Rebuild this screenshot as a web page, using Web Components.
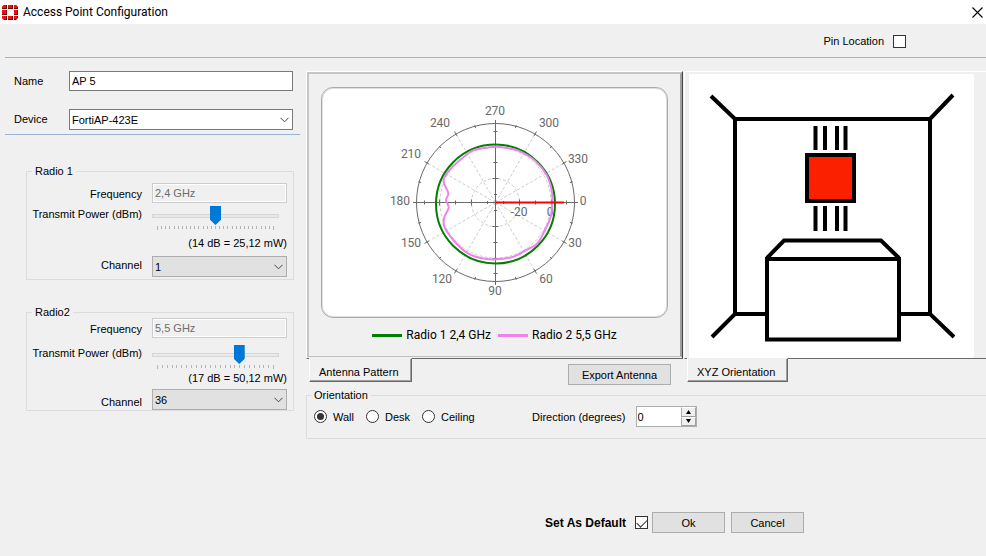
<!DOCTYPE html>
<html lang="en">
<head>
<meta charset="utf-8">
<title>Access Point Configuration</title>
<style>
  body { margin: 0; background: #f0f0f0; color: #000; font: 11px/16px "Liberation Sans", Arial, sans-serif; }
</style>
</head>
<body>
<ap-dialog></ap-dialog>

<script>
const base = `
  * { box-sizing: border-box; }
  :host { display: block; }
  input, select, button { font: inherit; color: inherit; margin: 0; border-radius: 0; }
  svg { display: block; }
  .check { appearance: none; flex: none; width: 13px; height: 13px; border: 1px solid #333; background: #fff; display: grid; place-items: center; }
  .check:checked::before { content: ""; width: 9px; height: 5px; border: solid #333; border-width: 0 0 1px 1px; transform: translateY(-1px) rotate(-45deg); }
`;

function define(name, html) {
  customElements.define(name, class extends HTMLElement {
    connectedCallback() {
      if (this.shadowRoot) return;
      const root = this.attachShadow({ mode: "open" });
      root.innerHTML = `<style>${base}</style>` + (typeof html === "function" ? html(this) : html);
    }
  });
}

define("title-bar", `
  <style>
    :host { background: #fff; }
    header { display: flex; align-items: center; height: 24px; margin-bottom: 1px; padding: 0 1px 0 2px; font: 12px/16px Roboto, sans-serif; }
    h1 { font: inherit; margin: 0 auto 0 5px; }
    button { border: 0; background: none; padding: 0; width: 13px; }
  </style>
  <header>
    <svg width="16" height="15" viewBox="0 0 16 15" aria-hidden="true">
      <g fill="#700"><path d="M0 2L2 0h3v4H0zM6 0h5v4H6zM12 0h2l2 2v2h-4zM0 5h5v5H0zM12 5h4v5h-4zM0 11h5v4H2L0 13zM6 11h5v4H6zM12 11h4v2l-2 2h-2z"/></g>
      <g fill="#f01010"><path d="M0 2L2 0h2v3H0zM6 0h4v3H6zM12 0h2l1 1v2h-3zM0 5h4v4H0zM12 5h3v4h-3zM0 11h4v3H1L0 13zM6 11h4v3H6zM12 11h3v2l-1 1h-2z"/></g>
    </svg>
    <h1>Access Point Configuration</h1>
    <button type="button" aria-label="Close"><svg width="11" height="11" viewBox="0 0 11 11"><path d="M.5 .5l10 10M10.5 .5l-10 10" stroke="#000" stroke-width="1.1"/></svg></button>
  </header>`);

define("pin-bar", `
  <style>
    :host { display: flow-root; margin-left: 5px; border-bottom: 1px solid #99b4d1; }
    label { display: flex; align-items: center; justify-content: flex-end; gap: 9px; height: 32px; padding-right: 80px; }
  </style>
  <label>Pin Location <input class="check" type="checkbox"></label>`);

define("win-select", el => `
  <style>
    :host { display: grid; }
    select { appearance: none; grid-area: 1/1; width: 100%; height: 21px; padding: 0 20px 0 2px; border: 1px solid var(--edge, #adadad); background: var(--face, #e1e1e1); }
    svg { grid-area: 1/1; place-self: center end; margin-right: 4px; pointer-events: none; }
  </style>
  <select aria-label="${el.getAttribute("label")}"><option>${el.getAttribute("value")}</option></select>
  <svg width="9" height="6" viewBox="0 0 9 6"><path d="M.5 .8l4 4 4-4" fill="none" stroke="#444"/></svg>`);

define("device-form", `
  <style>
    div { display: grid; grid-template-columns: 55px minmax(0, 1fr); row-gap: 18px; align-items: center; padding: 13px 7px 4px 9px; margin-left: 5px; border-bottom: 1px solid #99b4d1; }
    input { width: 100%; height: 20px; border: 1px solid #7a7a7a; background: #fff; padding: 0 2px; }
    span { margin-bottom: 2px; }
    win-select { --edge: #7a7a7a; --face: #fff; }
  </style>
  <div>
    <label for="name">Name</label><input id="name" value="AP 5">
    <span>Device</span><win-select label="Device" value="FortiAP-423E"></win-select>
  </div>`);

define("power-slider", el => {
  const max = +el.getAttribute("max");
  let ticks = "";
  for (let i = 0; i <= max; i++) {
    const x = Math.round(i * 116 / max) + .5;
    ticks += `M${x} 0v${i % max ? 3 : 4}`;
  }
  return `
  <style>
    :host { width: 127px; }
    input { appearance: none; display: block; width: 100%; height: 20px; background: none; }
    input::-webkit-slider-runnable-track { height: 4px; border: 1px solid #d6d6d6; background: #e7eaea; }
    input::-webkit-slider-thumb { appearance: none; width: 11px; height: 19px; margin-top: -9px; background: #0078d7; clip-path: polygon(0 0, 100% 0, 100% 72%, 50% 100%, 0 72%); }
    svg { margin-left: 5px; }
  </style>
  <input type="range" min="0" max="${max}" value="${el.getAttribute("value")}" aria-label="Transmit Power (dBm)">
  <svg width="117" height="4" viewBox="0 0 117 4"><path d="${ticks}" stroke="#b4b4b4"/></svg>`;
});

define("radio-settings", el => {
  const a = n => el.getAttribute(n);
  return `
  <style>
    fieldset { margin: 0; min-width: 0; padding: 6px 6px 2px 5px; border: 1px solid #dcdcdc; }
    legend { padding: 0 3px; line-height: 12px; }
    .grid { display: grid; grid-template-columns: 110px minmax(0, 1fr); column-gap: 10px; grid-template-rows: 20px 27px 26px 21px; align-items: end; }
    :host([compact]) fieldset { padding-top: 0; padding-bottom: 0; }
    :host([compact]) .grid { grid-template-rows: 20px 31px 18px 23px; }
    .grid > label, .grid > span { justify-self: end; white-space: nowrap; margin-bottom: 1px; }
    .grid > .power { margin-bottom: 8px; }
    .grid > .channel { margin-bottom: 4px; }
    :host([compact]) .grid > .channel { margin-bottom: 0; }
    output { grid-column: 1 / -1; place-self: center end; }
    input { width: 100%; height: 20px; border: 1px solid #ccc; background: #f0f0f0; color: #6d6d6d; padding: 0 2px; box-shadow: inset 0 0 0 1px #fff; }
  </style>
  <fieldset>
    <legend>${a("name")}</legend>
    <div class="grid">
      <label for="freq">Frequency</label><input id="freq" value="${a("frequency")}" disabled>
      <span class="power">Transmit Power (dBm)</span><power-slider max="${a("max")}" value="${a("power")}"></power-slider>
      <output>${a("readout")}</output>
      <span class="channel">Channel</span><win-select label="Channel" value="${a("channel")}"></win-select>
    </div>
  </fieldset>`;
});

define("polar-chart", () => {
  const cx = 495.5, cy = 202.5, f = n => n.toFixed(2);
  const at = (deg, r) => `${f(cx + r * Math.cos(deg * Math.PI / 180))} ${f(cy + r * Math.sin(deg * Math.PI / 180))}`;
  let spokes = "", ticks = "";
  for (let d = 0; d < 360; d += 15) {
    if (d % 30 === 0) {
      if (d % 90) spokes += `M${at(d, 0)}L${at(d, 79)}`;
      ticks += `M${at(d, 77)}L${at(d, 82)}`;
    } else ticks += `M${at(d, 77)}L${at(d, 80)}`;
  }
  for (const [r, h] of [[8, 1.5], [24, 3], [40, 2], [56, 3], [71, 2]])
    for (const s of [-r, r]) ticks += `M${cx + s} ${cy - h}v${2 * h}M${cx - h} ${cy + s}h${2 * h}`;
  // Gain samples of radio 2 in thirds of a pixel, joined by a closed smooth curve.
  const p = [[287,140],[260,143],[220,151],[196,167],[160,198],[133,232],[132,250],[145,280],[138,300],[146,323],[133,352],[133,380],[160,420],[200,458],[245,475],[287,478],[340,470],[375,452],[412,430],[435,390],[452,350],[457,307],[455,270],[440,225],[405,182],[355,152],[320,144]]
    .map(([x, y]) => [400 + x / 3, 100 + y / 3]);
  let curve = `M${f(p[0][0])} ${f(p[0][1])}`;
  p.forEach((b, i) => {
    const n = p.length, a = p[(i + n - 1) % n], c = p[(i + 1) % n], d = p[(i + 2) % n];
    curve += `C${[0, 1].map(k => f(b[k] + (c[k] - a[k]) / 6)).join(" ")} ${[0, 1].map(k => f(c[k] - (d[k] - b[k]) / 6)).join(" ")} ${f(c[0])} ${f(c[1])}`;
  });
  const labels = [["270",495,115],["240",440,127],["300",549,127],["210",411,158],["330",578,163],["180",400,205],["0",583,205],["150",411,247],["30",575,247],["120",442,283],["60",546,283],["90",495,295],["-20",519,216],["0",550,216]]
    .map(([t, x, y]) => `<text x="${x}" y="${y}">${t}</text>`).join("");
  return `
  <style>
    :host { font: 12px/16px Roboto, sans-serif; }
    figure { margin: 0; padding: 13px 12px; }
    .plot { border: 1px solid #aaa; border-radius: 12px; background: #fff; box-shadow: inset 0 0 0 1px #e0e0e0; }
    .plot svg { margin: 0 auto; padding: 1px 0; box-sizing: content-box; }
    text { fill: #696969; text-anchor: middle; }
    figcaption { display: flex; justify-content: center; gap: 7px; margin-top: 9px; }
    figcaption span { display: flex; align-items: center; gap: 4px; white-space: nowrap; }
    i { width: 30px; height: 3px; background: green; }
    .second i { background: violet; }
  </style>
  <figure>
    <div class="plot">
      <svg width="343" height="227" viewBox="323 89 343 227" role="img" aria-label="Antenna pattern">
        <g fill="none" stroke="#ccc" stroke-dasharray="3 2"><circle cx="${cx}" cy="${cy}" r="24"/><circle cx="${cx}" cy="${cy}" r="55.5"/><path d="${spokes}"/></g>
        <g fill="none" stroke="#696969"><circle cx="${cx}" cy="${cy}" r="79"/><path d="M413 ${cy}H578M${cx} 120V285"/><path d="${ticks}"/></g>
        ${labels}
        <circle cx="${cx}" cy="204" r="59.5" fill="none" stroke="green" stroke-width="2"/>
        <path d="${curve}" fill="none" stroke="violet" stroke-width="2"/>
        <path d="M${cx} ${cy}H564" stroke="red" stroke-width="2"/>
      </svg>
    </div>
    <figcaption><span><i></i>Radio 1 2,4 GHz</span><span class="second"><i></i>Radio 2 5,5 GHz</span></figcaption>
  </figure>`;
});

define("mount-diagram", `
  <style>
    :host { background: #fff; }
    svg { margin: 0 auto; }
  </style>
  <svg width="285" height="284" viewBox="689 74 285 284" fill="none" stroke="#000" stroke-width="4" role="img" aria-label="Wall mount">
    <path d="M711 96L735 119H930L953 95M735 119V314L712 337M930 119V314L954 337M735 314H767M899 314H930"/>
    <path d="M815.500 126v24M825 126v24M837 126v24M845.500 126v24M815.500 206v25M825 206v25M837 206v25M845.500 206v25"/>
    <rect x="807" y="155" width="47" height="46" fill="#fb2000"/>
    <path d="M767 259H899V339.500H767zM767 258L784 240.500H881L899 258"/>
  </svg>`);

define("tab-page", el => `
  <style>
    .page { border: 1px solid; border-color: #fff #696969 #696969 #fff; }
    .inner { padding: 2px 4px 0; }
    :host([framed]) .page { border-right-color: #444; }
    :host([framed]) .inner { padding: 0; border: solid; border-width: 2px 2px 1px 2px; border-color: #c6c6c6 #a0a0a0 #c0c0c0 #c6c6c6; margin: 0 0 1px; }
    :host(:not([framed])) .page { border-right: 0; }
    :host(:not([framed])) .inner { padding-right: 12px; }
    button { display: block; height: 24px; margin: -1px 0 0 3px; padding: 3px 12px 0 9px; border: 1px solid; border-color: #f0f0f0 #696969 #696969 #fff; background: #f0f0f0; box-shadow: inset -1px -1px #a0a0a0; position: relative; white-space: nowrap; }
  </style>
  <div class="page"><div class="inner"><slot></slot></div></div>
  <button type="button" role="tab" aria-selected="true">${el.getAttribute("label")}</button>`);

define("push-button", `
  <style>
    button { width: 100%; height: 21px; padding: 0; border: 1px solid #adadad; background: #e1e1e1; white-space: nowrap; }
  </style>
  <button type="button"><slot></slot></button>`);

define("orientation-box", `
  <style>
    fieldset { margin: 0; min-width: 0; display: block; padding: 5px 8px 11px 7px; border: 1px solid #dcdcdc; border-right: 0; }
    legend { margin-left: -3px; padding: 0 3px; line-height: 12px; }
    .row { display: flex; align-items: center; }
    label { display: flex; align-items: center; gap: 6px; white-space: nowrap; }
    .options { display: flex; gap: 12px; width: 218px; }
    [type=radio] { appearance: none; flex: none; width: 13px; height: 13px; border: 1px solid #333; border-radius: 50%; background: #fff; display: grid; place-items: center; }
    [type=radio]:checked::before { content: ""; width: 7px; height: 7px; border-radius: 50%; background: #333; }
    .spin { display: flex; width: 61px; height: 21px; margin-left: 10px; border: 1px solid #adadad; background: #fff; }
    [type=number] { appearance: textfield; flex: 1; min-width: 0; border: 0; padding: 0 1px; background: none; outline: 0; }
    [type=number]::-webkit-inner-spin-button { display: none; }
    .arrows { display: grid; grid-template-rows: 1fr 1fr; width: 15px; }
    .arrows button { display: grid; place-items: center; padding: 0; border: 1px solid; border-color: #fff #a0a0a0 #a0a0a0 #adadad; background: #f0f0f0; }
  </style>
  <fieldset>
    <legend>Orientation</legend>
    <div class="row">
      <div class="options">
        <label><input type="radio" name="mount" checked>Wall</label>
        <label><input type="radio" name="mount">Desk</label>
        <label><input type="radio" name="mount">Ceiling</label>
      </div>
      <label for="dir">Direction (degrees)</label>
      <div class="spin">
        <input id="dir" type="number" value="0">
        <div class="arrows">
          <button type="button" aria-label="Increase"><svg width="7" height="4" viewBox="0 0 7 4"><path d="M1 4L3.500 0 6 4z"/></svg></button>
          <button type="button" aria-label="Decrease"><svg width="7" height="4" viewBox="0 0 7 4"><path d="M1 0L3.500 4 6 0z"/></svg></button>
        </div>
      </div>
    </div>
  </fieldset>`);

define("dialog-footer", `
  <style>
    footer { display: flex; align-items: center; justify-content: flex-end; gap: 6px; padding: 73px 182px 22px 0; }
    label { display: flex; align-items: center; gap: 9px; font-size: 12px; font-weight: bold; white-space: nowrap; margin-right: -2px; }
    push-button { width: 73px; }
  </style>
  <footer>
    <label>Set As Default <input class="check" type="checkbox" checked></label>
    <push-button>Ok</push-button>
    <push-button>Cancel</push-button>
  </footer>`);

define("ap-dialog", `
  <style>
    main { display: grid; grid-template-columns: 300px minmax(0, 1fr); column-gap: 6px; }
    .radios { display: grid; gap: 26px; padding: 30px 6px 0 26px; }
    .tabs { display: grid; grid-template-columns: minmax(377px, 5fr) minmax(302px, 4fr); column-gap: 1px; padding-top: 13px; }
    .antenna { display: grid; }
    .antenna > * { grid-area: 1/1; }
    .export { place-self: end; width: 103px; margin: 0 12px -3px 0; }
    orientation-box { margin-top: 7px; }
  </style>
  <title-bar></title-bar>
  <pin-bar></pin-bar>
  <main>
    <section>
      <device-form></device-form>
      <div class="radios">
        <radio-settings name="Radio 1" frequency="2,4 GHz" max="28" power="14" readout="(14 dB = 25,12 mW)" channel="1"></radio-settings>
        <radio-settings compact name="Radio2" frequency="5,5 GHz" max="24" power="17" readout="(17 dB = 50,12 mW)" channel="36"></radio-settings>
      </div>
    </section>
    <section>
      <div class="tabs">
        <div class="antenna">
          <tab-page framed label="Antenna Pattern"><polar-chart></polar-chart></tab-page>
          <push-button class="export">Export Antenna</push-button>
        </div>
        <tab-page label="XYZ Orientation"><mount-diagram></mount-diagram></tab-page>
      </div>
      <orientation-box></orientation-box>
    </section>
  </main>
  <dialog-footer></dialog-footer>`);
</script>
</body>
</html>
